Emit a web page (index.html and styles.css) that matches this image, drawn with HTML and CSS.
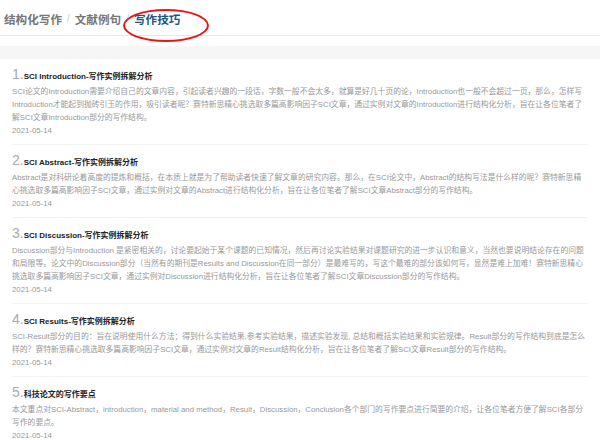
FILE: index.html
```html
<!DOCTYPE html>
<html lang="zh-CN">
<head>
    <meta charset="UTF-8">
    <title>写作技巧</title>
    <link rel="stylesheet" href="styles.css">
</head>
<body>
    <div class="tabs">
        <span class="tab">结构化写作</span>
        <span class="sep">/</span>
        <span class="tab">文献例句</span>
        <span class="sep">/</span>
        <span class="tab active">写作技巧</span>
        <span class="mark"></span>
    </div>

    <div class="list">
        <div class="item">
            <div class="title"><span class="num">1.</span>SCI Introduction-写作实例拆解分析</div>
            <div class="desc">SCI论文的Introduction需要介绍自己的文章内容，引起读者兴趣的一段话，字数一般不会太多，就算是好几十页的论，Introduction也一般不会超过一页，那么，怎样写Introduction才能起到抛砖引玉的作用，吸引读者呢？赛特新思精心挑选取多篇高影响因子SCI文章，通过实例对文章的Introduction进行结构化分析，旨在让各位笔者了解SCI文章Introduction部分的写作结构。</div>
            <div class="date">2021-05-14</div>
        </div>
        <div class="item">
            <div class="title"><span class="num">2.</span>SCI Abstract-写作实例拆解分析</div>
            <div class="desc">Abstract是对科研论着高度的提炼和概括，在本质上就是为了帮助读者快速了解文章的研究内容。那么，在SCI论文中，Abstract的结构写法是什么样的呢？赛特新思精心挑选取多篇高影响因子SCI文章，通过实例对文章的Abstract进行结构化分析，旨在让各位笔者了解SCI文章Abstract部分的写作结构。</div>
            <div class="date">2021-05-14</div>
        </div>
        <div class="item">
            <div class="title"><span class="num">3.</span>SCI Discussion-写作实例拆解分析</div>
            <div class="desc">Discussion部分与Introduction 是紧密相关的，讨论要起始于某个课题的已知情况，然后再讨论实验结果对课题研究的进一步认识和意义，当然也要说明结论存在的问题和局限等。论文中的Discussion部分（当然有的期刊是Results and Discussion在同一部分）是最难写的，写这个最难的部分该如何写，显然是难上加难！赛特新思精心挑选取多篇高影响因子SCI文章，通过实例对Discussion进行结构化分析，旨在让各位笔者了解SCI文章Discussion部分的写作结构。</div>
            <div class="date">2021-05-14</div>
        </div>
        <div class="item">
            <div class="title"><span class="num">4.</span>SCI Results-写作实例拆解分析</div>
            <div class="desc">SCI-Result部分的目的：旨在说明使用什么方法；得到什么实验结果,参考实验结果，描述实验发现, 总结和概括实验结果和实验规律。Result部分的写作结构到底是怎么样的？赛特新思精心挑选取多篇高影响因子SCI文章，通过实例对文章的Result结构化分析，旨在让各位笔者了解SCI文章Result部分的写作结构。</div>
            <div class="date">2021-05-14</div>
        </div>
        <div class="item">
            <div class="title"><span class="num">5.</span>科技论文的写作要点</div>
            <div class="desc">本文重点对SCI-Abstract，introduction，material and method，Result，Discussion，Conclusion各个部门的写作要点进行简要的介绍，让各位笔者方便了解SCI各部分写作的要点。</div>
            <div class="date">2021-05-14</div>
        </div>
    </div>
</body>
</html>
```

FILE: styles.css
```css
body {
    margin: 0;
    background: #fff;
    font-family: "Liberation Sans", "Noto Sans CJK SC", sans-serif;
    color: #999;
}

.tabs {
    position: relative;
    height: 36px;
    display: flex;
    align-items: center;
    padding-left: 4px;
    padding-top: 2px;
    box-sizing: border-box;
    border-bottom: 1px solid #e8e8e8;
    margin-bottom: 10px;
}

.tab {
    font-size: 11.6px;
    font-weight: bold;
    color: #777;
}

.tab.active {
    color: #1d5878;
}

.sep {
    font-size: 10px;
    color: #ccc;
    margin: 0 5px;
}

.mark {
    position: absolute;
    left: 123px;
    top: 9px;
    width: 86px;
    height: 33px;
    box-sizing: border-box;
    border: 2px solid #e8161b;
    border-radius: 50%;
}

.list {
    border-top: 13px solid #f6f6f6;
    padding: 0 12px;
}

.item {
    padding: 8px 0 7px;
    border-bottom: 1px solid #f3f3f3;
}

.title {
    font-size: 8px;
    line-height: 17px;
    font-weight: bold;
    color: #222;
}

.num {
    font-size: 14px;
    line-height: 1;
    font-weight: normal;
    color: #aaa;
}

.desc {
    font-size: 7.8px;
    line-height: 13px;
}

.date {
    font-size: 7.8px;
    line-height: 13px;
}
```
